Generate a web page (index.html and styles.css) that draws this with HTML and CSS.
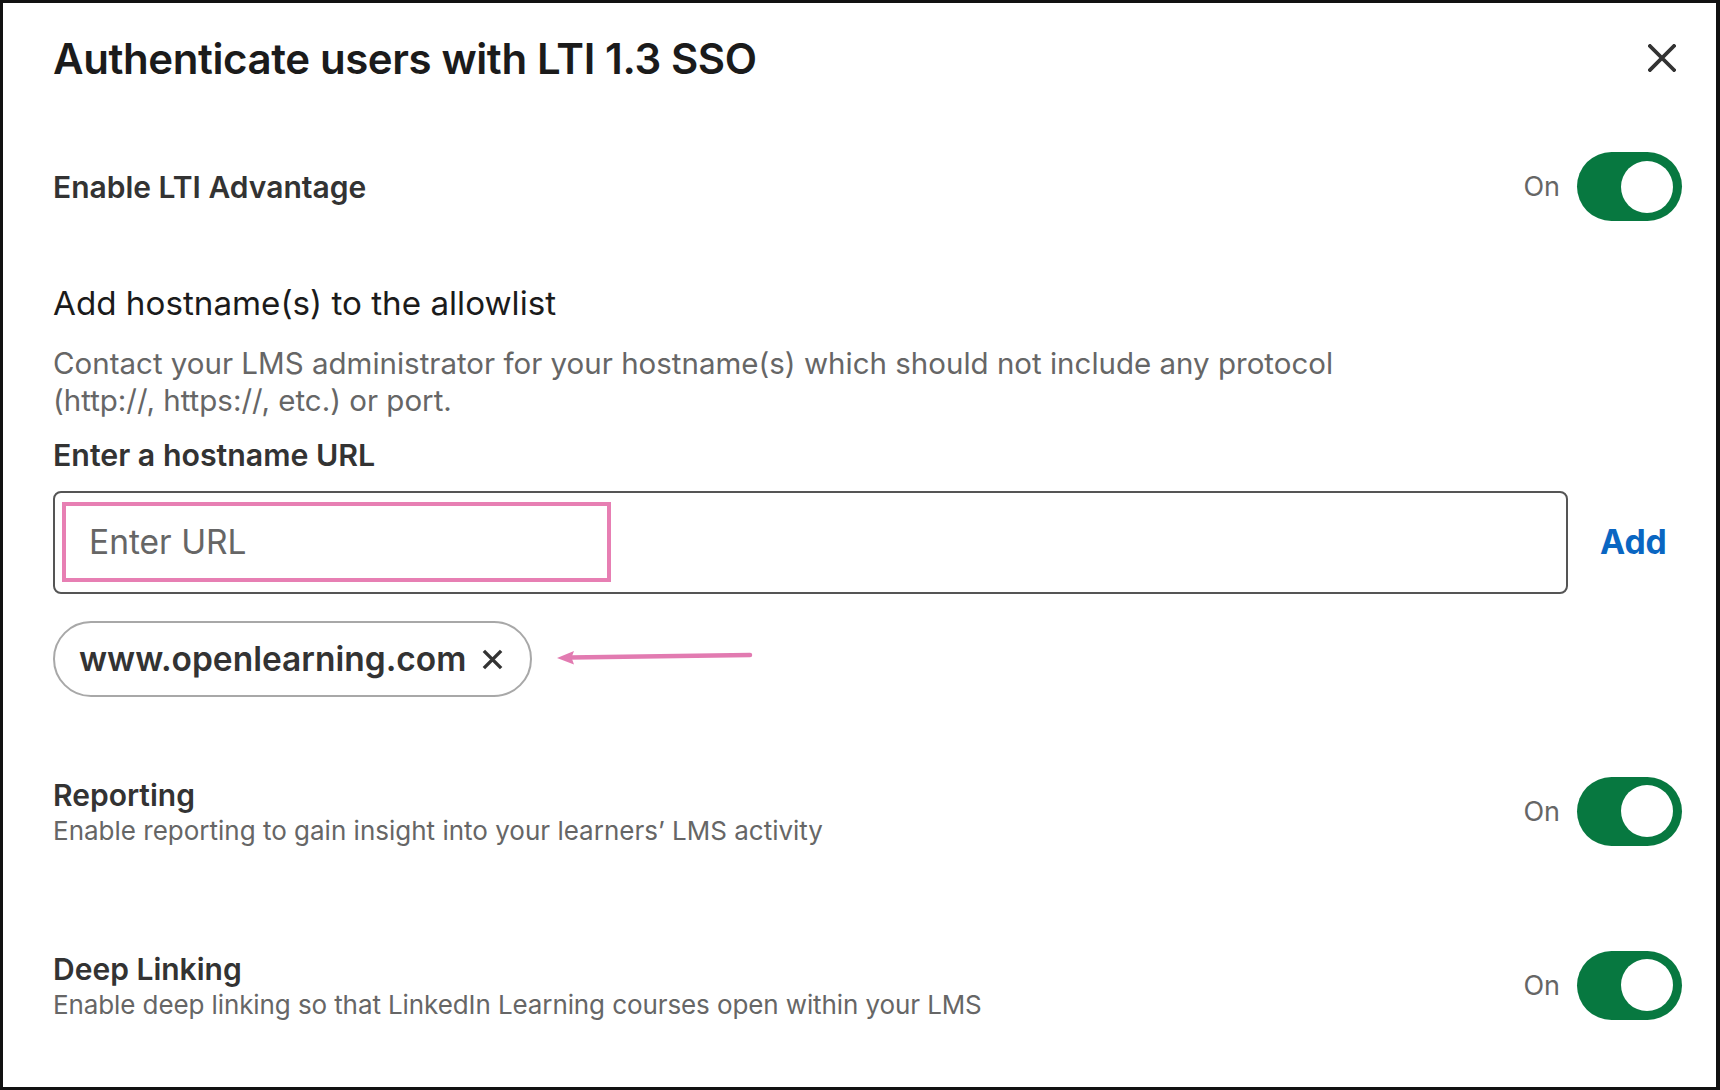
FILE: index.html
```html
<!DOCTYPE html>
<html lang="en">
<head>
<meta charset="utf-8">
<title>Authenticate users with LTI 1.3 SSO</title>
<link rel="stylesheet" href="styles.css">
</head>
<body>
<div class="dialog">
  <header class="dlg-head">
    <h1 class="dlg-title">Authenticate users with LTI 1.3 SSO</h1>
    <button class="close-btn" aria-label="Close">
      <svg viewBox="0 0 28 28" width="28" height="28"><path d="M2 2 L26 26 M26 2 L2 26" stroke="#333" stroke-width="3.8" stroke-linecap="square" fill="none"/></svg>
    </button>
  </header>

  <section class="setting setting--lti">
    <div class="setting-text">
      <h2 class="setting-label">Enable LTI Advantage</h2>
    </div>
    <div class="switch-wrap">
      <span class="switch-state">On</span>
      <span class="switch"><span class="knob"></span></span>
    </div>
  </section>

  <section class="allowlist">
    <h2 class="allow-title">Add hostname(s) to the allowlist</h2>
    <p class="allow-desc">Contact your LMS administrator for your hostname(s) which should not include any protocol<br>(http://, https://, etc.) or port.</p>
    <label class="field-label">Enter a hostname URL</label>
    <div class="url-row">
      <div class="url-box">
        <div class="url-highlight"><span class="placeholder">Enter URL</span></div>
      </div>
      <button class="add-btn">Add</button>
    </div>
    <div class="chip-row">
      <span class="chip">www.openlearning.com
        <svg class="chip-x" viewBox="0 0 24 24" width="23" height="23"><path d="M3 3 L21 21 M21 3 L3 21" stroke="#333" stroke-width="3.6" fill="none"/></svg>
      </span>
      <svg class="pointer" viewBox="0 0 200 20" width="200" height="20"><path d="M14 11.5 L194 9" stroke="#e27bb1" stroke-width="4.5" stroke-linecap="round" fill="none"/><path d="M1 12 L18 5 L15.5 11.6 L18 18.5 Z" fill="#e27bb1"/></svg>
    </div>
  </section>

  <section class="setting setting--reporting">
    <div class="setting-text">
      <h2 class="setting-label setting-label--sub">Reporting</h2>
      <p class="setting-desc">Enable reporting to gain insight into your learners’ LMS activity</p>
    </div>
    <div class="switch-wrap">
      <span class="switch-state">On</span>
      <span class="switch"><span class="knob"></span></span>
    </div>
  </section>

  <section class="setting setting--deep">
    <div class="setting-text">
      <h2 class="setting-label setting-label--sub">Deep Linking</h2>
      <p class="setting-desc setting-desc--deep">Enable deep linking so that LinkedIn Learning courses open within your LMS</p>
    </div>
    <div class="switch-wrap">
      <span class="switch-state">On</span>
      <span class="switch"><span class="knob"></span></span>
    </div>
  </section>
</div>
</body>
</html>
```

FILE: styles.css
```css
* { box-sizing: border-box; margin: 0; padding: 0; }
html, body { width: 1720px; height: 1090px; overflow: hidden; }
body { font-family: Inter, "Noto Sans", sans-serif; background: #fff; color: #333; }

.dialog {
  width: 1720px;
  height: 1090px;
  border: 3px solid #111;
  border-right-width: 4px;
  padding: 32px 34px 0 50px;
  display: flex;
  flex-direction: column;
  background: #fff;
}

.dlg-head {
  display: flex;
  align-items: center;
  justify-content: space-between;
  height: 48px;
}
.dlg-title {
  font-size: 42px;
  line-height: 48px;
  font-weight: 600;
  color: #1b1b1b;
  letter-spacing: -0.4px;
}
.close-btn {
  width: 28px;
  height: 28px;
  margin-right: 6px;
  margin-top: -2px;
  border: 0;
  background: none;
  display: flex;
}

.setting {
  display: flex;
  align-items: center;
  justify-content: space-between;
}
.setting--lti { margin-top: 69px; height: 69px; }
.setting--reporting { margin-top: 79px; }
.setting--deep { margin-top: 104px; }

.setting-label {
  font-size: 30px;
  line-height: 36px;
  font-weight: 600;
  color: #333;
}
.setting-label--sub { line-height: 39px; }
.setting-desc {
  font-size: 26px;
  line-height: 31px;
  color: #666;
}
.setting-desc--deep { letter-spacing: -0.1px; }

.switch-wrap {
  display: flex;
  align-items: center;
  gap: 17px;
}
.switch-state {
  font-size: 27px;
  color: #666;
}
.switch {
  width: 105px;
  height: 69px;
  border-radius: 35px;
  background: #077840;
  display: flex;
  align-items: center;
  justify-content: flex-end;
  padding-right: 9px;
}
.knob {
  width: 52px;
  height: 52px;
  border-radius: 50%;
  background: #fff;
}

.allowlist { display: flex; flex-direction: column; }
.allow-title {
  margin-top: 62px;
  font-size: 33.2px;
  line-height: 40px;
  font-weight: 400;
  color: #1b1b1b;
}
.allow-desc {
  margin-top: 22px;
  font-size: 29.5px;
  line-height: 37px;
  color: #666;
}
.field-label {
  margin-top: 18px;
  font-size: 30.3px;
  line-height: 36px;
  font-weight: 600;
  color: #333;
}

.url-row {
  margin-top: 18px;
  display: flex;
  align-items: center;
}
.url-box {
  flex: 1;
  height: 103px;
  border: 2px solid #555;
  border-radius: 8px;
  padding: 9px 7px;
}
.url-highlight {
  width: 549px;
  height: 80px;
  border: 4px solid #e77fb3;
  display: flex;
  align-items: center;
  padding-left: 23px;
}
.placeholder {
  font-size: 33.5px;
  color: #666;
}
.add-btn {
  width: 114px;
  border: 0;
  background: none;
  font-family: inherit;
  font-size: 33.7px;
  font-weight: 700;
  color: #0a66c2;
  text-align: left;
  padding-left: 32px;
  margin-top: -2px;
}

.chip-row {
  margin-top: 27px;
  display: flex;
  align-items: center;
  gap: 24px;
}
.chip {
  height: 76px;
  border: 2px solid #a8a8a8;
  border-radius: 40px;
  padding: 0 26px 0 24px;
  display: flex;
  align-items: center;
  gap: 15px;
  font-size: 33.5px;
  font-weight: 600;
  color: #333;
}
.chip-x { display: block; }
.pointer { display: block; margin-top: -6px; }
```
